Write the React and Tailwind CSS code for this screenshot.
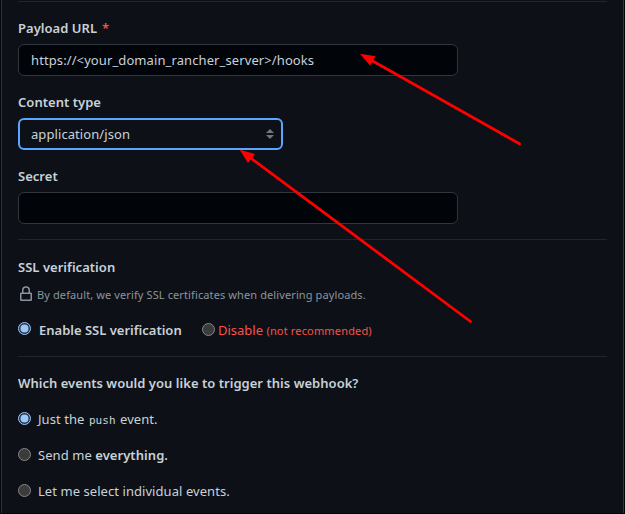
function Label({ children }) {
  return <div className="flex h-5 items-center pt-[2px] text-[13px] font-semibold tracking-[0.03px] whitespace-pre text-[#c9d1d9]">{children}</div>;
}

function Radio({ checked }) {
  return (
    <svg className="size-[13px] shrink-0" viewBox="0 0 13 13">
      {checked ? (
        <>
          <circle cx="6.5" cy="6.5" r="6" fill="#30343b" stroke="#99c8ff" />
          <circle cx="6.5" cy="6.5" r="4" fill="#99c8ff" />
        </>
      ) : (
        <circle cx="6.5" cy="6.5" r="6" fill="#3b3b3b" stroke="#858585" />
      )}
    </svg>
  );
}

function Event({ checked, children }) {
  return (
    <label className="flex h-5 items-center gap-[7px]">
      <span className="flex pb-[2px]"><Radio checked={checked} /></span>
      <span className="pt-[2px] text-[13px] tracking-[0.06px] whitespace-pre">{children}</span>
    </label>
  );
}

export default function App() {
  return (
    <div className="relative h-[514px] w-[625px] overflow-hidden bg-[#010409] pr-px pl-px font-['Noto_Sans','Open_Sans',sans-serif] text-[#c9d1d9]">
      <main className="flex h-[513px] flex-col border-x border-[#30363d] bg-[#0d1117] pt-px pr-4 pl-4">
        <div className="h-px w-full shrink-0 bg-[#21262d]" />

        <div className="mt-4">
          <Label>
            <span>Payload URL</span>
            <span className="pl-[5px] text-[#f85149]">*</span>
          </Label>
        </div>
        <div className="mt-[6px] flex h-8 w-[440px] shrink-0 items-center rounded-md border border-[#30363d] bg-[#010409] pt-[2px] pl-3 text-[13px] tracking-[0.1px]">
          https://&lt;your_domain_rancher_server&gt;/hooks
        </div>

        <div className="mt-4">
          <Label>Content type</Label>
        </div>
        <div className="mt-[6px] flex h-8 w-[265px] shrink-0 items-center justify-between rounded-md border-2 border-[#58a6ff] pr-[7px] pl-[11px] text-[13px] tracking-[0.08px]">
          <span className="pt-[2px]">application/json</span>
          <svg className="h-[10px] w-2" viewBox="0 0 8 10" fill="#6e7681">
            <path d="M4 0L8 4H0ZM0 6H8L4 10Z" />
          </svg>
        </div>

        <div className="mt-4">
          <Label>Secret</Label>
        </div>
        <div className="mt-[6px] h-8 w-[440px] shrink-0 rounded-md border border-[#30363d] bg-[#010409]" />

        <div className="mt-[15px] h-px w-full shrink-0 bg-[#21262d]" />

        <div className="mt-[17px]">
          <Label>SSL verification</Label>
        </div>
        <div className="mt-[7px] flex h-5 items-center text-[11px] tracking-[0.11px] text-[#8b949e]">
          <svg className="mr-[3px] mb-px h-4 w-4 shrink-0" viewBox="0 0 16 16" fill="none" stroke="#8b949e" strokeWidth="1.5">
            <rect x="2.75" y="7.25" width="10.5" height="7" rx="0.5" />
            <path d="M4.75 7V4.25a3.25 3.25 0 0 1 6.5 0V7" />
          </svg>
          <span className="pt-[2px]">By default, we verify SSL certificates when delivering payloads.</span>
        </div>
        <div className="mt-[16px] flex h-5 items-center text-[13px]">
          <span className="flex pb-[3px]"><Radio checked /></span>
          <span className="ml-2 w-[143px] pt-px font-semibold whitespace-nowrap">Enable SSL verification</span>
          <span className="ml-5 flex pb-px"><Radio /></span>
          <span className="ml-[3px] pt-px whitespace-nowrap text-[#f85149]">Disable <span className="text-[11px] tracking-[0.16px]">(not recommended)</span></span>
        </div>

        <div className="mt-4 h-px w-full shrink-0 bg-[#21262d]" />

        <div className="mt-4">
          <Label>Which events would you like to trigger this webhook?</Label>
        </div>
        <div className="mt-4 flex flex-col gap-4">
          <Event checked>
            Just the <code className="px-px font-['DejaVu_Sans_Mono',monospace] text-[11px]">push</code> event.
          </Event>
          <Event>
            Send me <b className="font-semibold">everything.</b>
          </Event>
          <Event>Let me select individual events.</Event>
        </div>
      </main>

      <svg className="pointer-events-none absolute inset-0 h-[514px] w-[625px]" viewBox="0 0 625 514" fill="#ff0000" stroke="none">
        <path d="M370 59.500L519.500 143.800" stroke="#ff0000" strokeWidth="2.8" strokeLinecap="round" />
        <path d="M360 53.700L375.500 56.200L373 61L370 65.500Z" />
        <path d="M250 157.500L470.500 321.500" stroke="#ff0000" strokeWidth="2.8" strokeLinecap="round" />
        <path d="M239.700 149.700L255 154L251.500 158.500L248 163Z" />
      </svg>
    </div>
  );
}
